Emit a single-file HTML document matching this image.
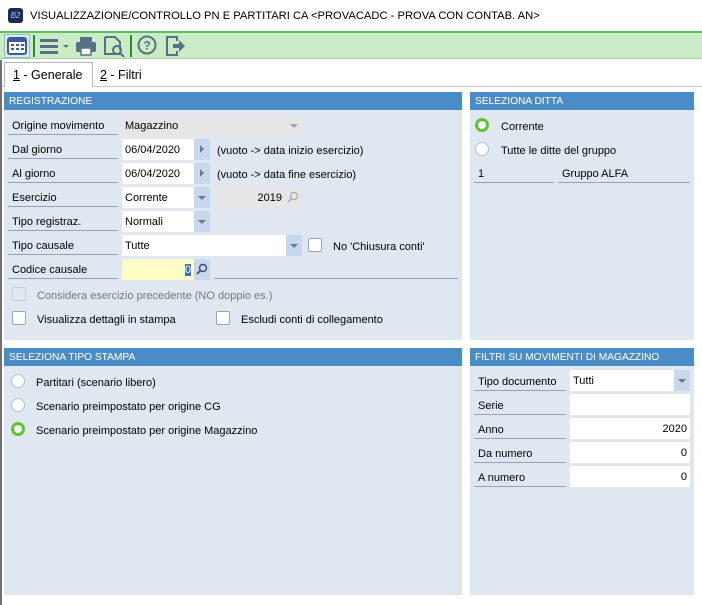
<!DOCTYPE html><html><head><style>
*{box-sizing:border-box;margin:0;padding:0}
body{width:702px;height:605px;background:#fff;font-family:"Liberation Sans",sans-serif;font-size:11px;color:#000;position:relative;overflow:hidden}
.a{position:absolute}
.hdr{position:absolute;background:#4a8cc5;color:#fff;font-size:10.2px;line-height:20px;padding-left:5px;height:18px}
.pn{position:absolute;background:#dfe7f1}
.lb{position:absolute;height:20px;line-height:22px;padding-left:4px;border-bottom:1px solid #8da3bd;font-size:11px}
.f{position:absolute;height:21px;line-height:22px;background:#fff;padding:0 3px;font-size:11px}
.btn{position:absolute;height:21px;width:16px;background:#c8d8ec}
.dd:after{content:"";position:absolute;left:4px;top:9px;border-left:4px solid transparent;border-right:4px solid transparent;border-top:4px solid #6b7a8c}
.ar:after{content:"";position:absolute;left:6px;top:6px;border-top:4px solid transparent;border-bottom:4px solid transparent;border-left:4px solid #6b7a8c}
.cb{position:absolute;width:14px;height:14px;background:#fff;border:1px solid #9aa4ae;border-radius:2px}
.rd{position:absolute;width:14px;height:14px;background:#fff;border:1px solid #b7bcc2;border-radius:50%}
.rs{position:absolute;width:14px;height:14px;border:3px solid #5ac828;border-radius:50%;background:#fff}
.t{position:absolute;line-height:16px;font-size:11px}
</style></head><body>
<div class="a" style="left:8px;top:8px;width:15px;height:15px;background:#1e2a52;border-radius:3px;color:#9cc3ff;font-size:8px;line-height:15px;text-align:center;font-style:italic">B2</div>
<div class="t" style="left:30px;top:8px;font-size:11.2px">VISUALIZZAZIONE/CONTROLLO PN E PARTITARI CA &lt;PROVACADC - PROVA CON CONTAB. AN&gt;</div>
<div class="a" style="left:0;top:31px;width:702px;height:28px;background:#c9ebc6;border-top:2px solid #5cc05c;border-bottom:1px solid #a8d2a4"></div>
<div class="a" style="left:4px;top:34px;width:26px;height:24px;background:#dde8f5;border:1px solid #9bb"></div>
<svg class="a" style="left:6px;top:36px" width="22" height="20"><rect x="2" y="2" width="18" height="16" rx="2" fill="#fff" stroke="#3a5a9a" stroke-width="2"/><rect x="2" y="2" width="18" height="4" fill="#3a5a9a"/><g fill="#3a5a9a"><rect x="5" y="8" width="3" height="2"/><rect x="10" y="8" width="3" height="2"/><rect x="15" y="8" width="3" height="2"/><rect x="5" y="12" width="3" height="2"/><rect x="10" y="12" width="3" height="2"/><rect x="15" y="12" width="3" height="2"/></g></svg>
<div class="a" style="left:33px;top:35px;width:2px;height:22px;background:#2a8a2a"></div>
<svg class="a" style="left:38px;top:36px" width="34" height="20"><g fill="#5b6f84"><rect x="2" y="3" width="18" height="3"/><rect x="2" y="9" width="18" height="3"/><rect x="2" y="15" width="18" height="3"/><path d="M25 9h6l-3 3z"/></g></svg>
<svg class="a" style="left:74px;top:35px" width="24" height="22"><g fill="#5b6f84"><rect x="6" y="2" width="12" height="5"/><rect x="2" y="7" width="20" height="10" rx="2"/></g><rect x="7" y="13" width="10" height="7" fill="#fff" stroke="#5b6f84" stroke-width="1.5"/></svg>
<svg class="a" style="left:102px;top:35px" width="24" height="22"><path d="M3 2h10l5 5v8M18 19H3V2" fill="none" stroke="#5b6f84" stroke-width="2"/><circle cx="15" cy="15" r="4" fill="none" stroke="#5b6f84" stroke-width="2"/><path d="M18 18l4 4" stroke="#5b6f84" stroke-width="2"/></svg>
<div class="a" style="left:130px;top:35px;width:2px;height:22px;background:#2a8a2a"></div>
<svg class="a" style="left:136px;top:35px" width="24" height="22"><circle cx="11" cy="10" r="8.5" fill="none" stroke="#5b6f84" stroke-width="2"/><text x="7.5" y="14.5" font-size="12" font-family="Liberation Sans" font-weight="bold" fill="#5b6f84">?</text></svg>
<svg class="a" style="left:164px;top:35px" width="24" height="22"><path d="M13 6V2H3v18h10v-4" fill="none" stroke="#5b6f84" stroke-width="2"/><path d="M9 9h6V5l6 6-6 6v-4H9z" fill="#5b6f84"/></svg>
<div class="a" style="left:0;top:86px;width:702px;height:1px;background:#c9c9c9"></div>
<div class="a" style="left:4px;top:62px;width:89px;height:25px;background:#fff;border:1px solid #b9b9b9;border-bottom:none"></div>
<div class="t" style="left:13px;top:67px;font-size:12.5px"><u>1</u> - Generale</div>
<div class="t" style="left:100px;top:67px;font-size:12.5px"><u>2</u> - Filtri</div>
<div class="a" style="left:0;top:60px;width:2px;height:545px;background:#707070"></div>
<div class="pn" style="left:4px;top:92px;width:458px;height:248px"></div>
<div class="hdr" style="left:4px;top:92px;width:458px">REGISTRAZIONE</div>
<div class="lb" style="left:8px;top:115px;width:110px">Origine movimento</div>
<div class="f" style="left:122px;top:115px;width:180px;background:#e6e6e6">Magazzino</div><div class="btn dd" style="left:286px;top:115px;background:#e6e6e6;opacity:.6"></div>
<div class="lb" style="left:8px;top:139px;width:110px">Dal giorno</div>
<div class="f" style="left:122px;top:139px;width:72px">06/04/2020</div><div class="btn ar" style="left:194px;top:139px"></div>
<div class="t" style="left:217px;top:143px">(vuoto -&gt; data inizio esercizio)</div>
<div class="lb" style="left:8px;top:163px;width:110px">Al giorno</div>
<div class="f" style="left:122px;top:163px;width:72px">06/04/2020</div><div class="btn ar" style="left:194px;top:163px"></div>
<div class="t" style="left:217px;top:167px">(vuoto -&gt; data fine esercizio)</div>
<div class="lb" style="left:8px;top:187px;width:110px">Esercizio</div>
<div class="f" style="left:122px;top:187px;width:72px">Corrente</div><div class="btn dd" style="left:194px;top:187px"></div>
<div class="f" style="left:214px;top:187px;width:88px;background:#e6e6e6;text-align:right;padding-right:20px">2019</div>
<svg class="a" style="left:287px;top:191px" width="12" height="12"><circle cx="7" cy="5" r="3.5" fill="none" stroke="#aaa" stroke-width="1.3"/><path d="M4.5 7.5L1 11" stroke="#aaa" stroke-width="1.5"/></svg>
<div class="lb" style="left:8px;top:211px;width:110px">Tipo registraz.</div>
<div class="f" style="left:122px;top:211px;width:72px">Normali</div><div class="btn dd" style="left:194px;top:211px"></div>
<div class="lb" style="left:8px;top:235px;width:110px">Tipo causale</div>
<div class="f" style="left:122px;top:235px;width:164px">Tutte</div><div class="btn dd" style="left:286px;top:235px"></div>
<div class="cb" style="left:308px;top:238px"></div><div class="t" style="left:333px;top:239px">No 'Chiusura conti'</div>
<div class="lb" style="left:8px;top:259px;width:110px">Codice causale</div>
<div class="f" style="left:122px;top:259px;width:72px;background:#fffbc4;text-align:right"><span style="background:#3a6fc4;color:#fff">0</span></div><div class="btn" style="left:194px;top:259px"></div>
<svg class="a" style="left:196px;top:263px" width="12" height="12"><circle cx="7" cy="5" r="3.5" fill="none" stroke="#3a4a6a" stroke-width="1.4"/><path d="M4.5 7.5L1 11" stroke="#3a4a6a" stroke-width="1.6"/></svg>
<div class="a" style="left:214px;top:278px;width:244px;height:1px;background:#8da3bd"></div>
<div class="cb" style="left:12px;top:287px;background:#e4e8ec;border-color:#c8ccd0"></div><div class="t" style="left:37px;top:288px;color:#777">Considera esercizio precedente (NO doppio es.)</div>
<div class="cb" style="left:12px;top:311px"></div><div class="t" style="left:37px;top:312px">Visualizza dettagli in stampa</div>
<div class="cb" style="left:216px;top:311px"></div><div class="t" style="left:241px;top:312px">Escludi conti di collegamento</div>
<div class="pn" style="left:470px;top:92px;width:224px;height:248px"></div>
<div class="hdr" style="left:470px;top:92px;width:224px">SELEZIONA DITTA</div>
<div class="rs" style="left:475px;top:118px"></div><div class="t" style="left:501px;top:119px">Corrente</div>
<div class="rd" style="left:475px;top:142px"></div><div class="t" style="left:501px;top:143px">Tutte le ditte del gruppo</div>
<div class="lb" style="left:474px;top:163px;width:80px">1</div>
<div class="lb" style="left:558px;top:163px;width:132px">Gruppo ALFA</div>
<div class="pn" style="left:4px;top:348px;width:458px;height:247px"></div>
<div class="hdr" style="left:4px;top:348px;width:458px">SELEZIONA TIPO STAMPA</div>
<div class="rd" style="left:11px;top:374px"></div><div class="t" style="left:36px;top:375px">Partitari (scenario libero)</div>
<div class="rd" style="left:11px;top:398px"></div><div class="t" style="left:36px;top:399px">Scenario preimpostato per origine CG</div>
<div class="rs" style="left:11px;top:422px"></div><div class="t" style="left:36px;top:423px">Scenario preimpostato per origine Magazzino</div>
<div class="pn" style="left:470px;top:348px;width:224px;height:247px"></div>
<div class="hdr" style="left:470px;top:348px;width:224px">FILTRI SU MOVIMENTI DI MAGAZZINO</div>
<div class="lb" style="left:474px;top:371px;width:92px">Tipo documento</div>
<div class="f" style="left:570px;top:370px;width:104px">Tutti</div><div class="btn dd" style="left:674px;top:370px"></div>
<div class="lb" style="left:474px;top:395px;width:92px">Serie</div><div class="f" style="left:570px;top:394px;width:120px"></div>
<div class="lb" style="left:474px;top:419px;width:92px">Anno</div><div class="f" style="left:570px;top:418px;width:120px;text-align:right">2020</div>
<div class="lb" style="left:474px;top:443px;width:92px">Da numero</div><div class="f" style="left:570px;top:442px;width:120px;text-align:right">0</div>
<div class="lb" style="left:474px;top:467px;width:92px">A numero</div><div class="f" style="left:570px;top:466px;width:120px;text-align:right">0</div>
</body></html>
